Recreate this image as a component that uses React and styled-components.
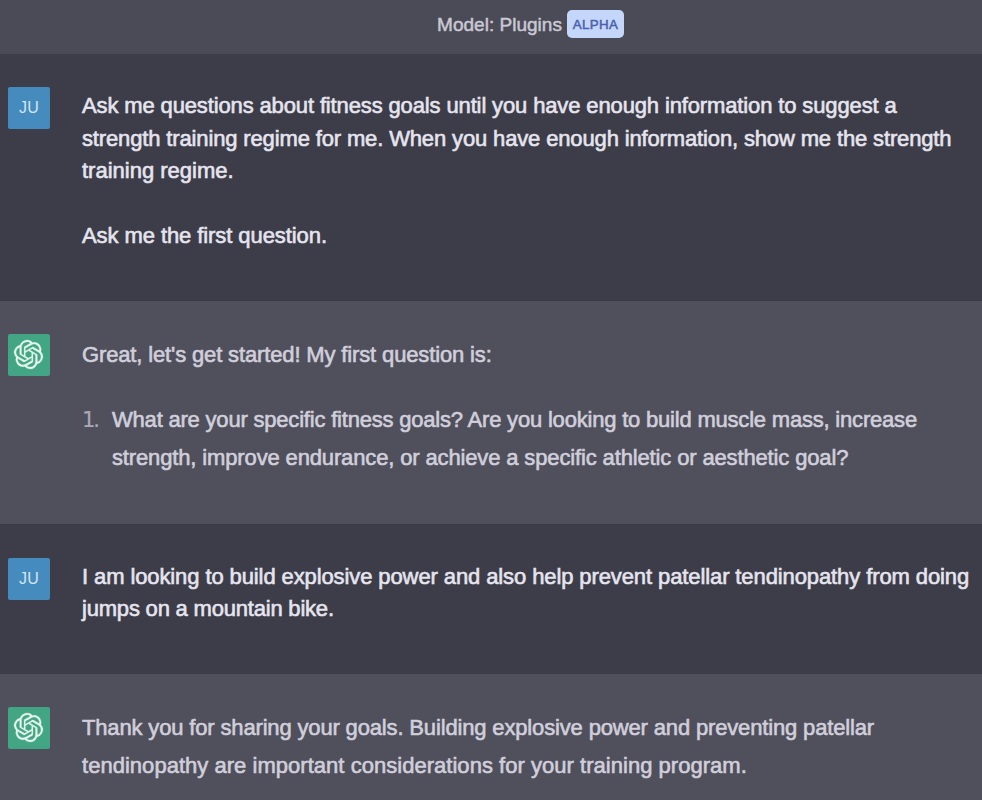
import React from 'react';
import styled, { createGlobalStyle } from 'styled-components';
import { SiOpenai } from 'react-icons/si';

const GlobalStyle = createGlobalStyle`
  *, *::before, *::after { box-sizing: border-box; }
  body {
    margin: 0;
    background: #50505d;
    font-family: "Liberation Sans", Arial, sans-serif;
    overflow: hidden;
  }
`;

const Page = styled.main`
  display: flex;
  flex-direction: column;
  width: 982px;
  height: 800px;
  overflow: hidden;
`;

const Header = styled.header`
  display: flex;
  align-items: center;
  justify-content: center;
  gap: 5px;
  flex: none;
  height: 54px;
  padding: 0 0 6px 79px;
  background: #4b4b57;
  color: #c9c8d4;
`;

const ModelName = styled.span`
  padding-top: 2px;
  font-size: 19px;
  letter-spacing: 0.02px;
  -webkit-text-stroke: 0.5px currentColor;
`;

const Badge = styled.span`
  display: flex;
  align-items: center;
  justify-content: center;
  width: 57px;
  height: 28px;
  padding-top: 1px;
  border-radius: 5px;
  background: #c4d7fb;
  color: #4a61ad;
  font-size: 13.3px;
  letter-spacing: 0.35px;
  -webkit-text-stroke: 0.5px currentColor;
`;

const Message = styled.section`
  display: flex;
  align-items: flex-start;
  gap: 32px;
  flex: none;
  height: ${(p) => p.$height}px;
  padding: 33px 0 0 8px;
  border-bottom: 1px solid #3a3b46;
  background: ${(p) => (p.$assistant ? '#50505d' : '#3d3d49')};
  color: ${(p) => (p.$assistant ? '#d0cfdb' : '#e6e5ef')};
`;

const Avatar = styled.div`
  display: flex;
  align-items: center;
  justify-content: center;
  flex: none;
  width: 42px;
  height: 42px;
  border-radius: 2px;
  background: ${(p) => (p.$assistant ? '#42a583' : '#468bbd')};
  color: ${(p) => (p.$assistant ? '#e4f6ee' : '#d0e6f6')};
  font-size: 16px;
  letter-spacing: 0.2px;
`;

const Logo = styled(SiOpenai)`
  width: 29px;
  height: 29px;
  margin: -1px 1px 0 0;
  stroke: currentColor;
  stroke-width: 0.2px;
  overflow: visible;
`;

const Body = styled.div`
  display: flex;
  flex-direction: column;
  gap: ${(p) => p.$gap || 0}px;
  padding-top: ${(p) => p.$top}px;
  font-size: 22px;
  line-height: ${(p) => p.$leading}px;
  -webkit-text-stroke: 0.6px currentColor;
`;

const Paragraph = styled.p`
  margin: 0;
`;

const Line = styled.span`
  display: block;
  white-space: nowrap;
  letter-spacing: ${(p) => p.$track || 0}px;
`;

const ListItem = styled.div`
  display: grid;
  grid-template-columns: 30px auto;
`;

const Marker = styled.span`
  color: #a9a9b7;
  font-family: "DejaVu Sans", sans-serif;
  font-size: 21px;
  letter-spacing: -2px;
  -webkit-text-stroke: 0.2px currentColor;
`;

export default function App() {
  return (
    <>
      <GlobalStyle />
      <Page>
        <Header>
          <ModelName>Model: Plugins</ModelName>
          <Badge>ALPHA</Badge>
        </Header>

        <Message $height={247}>
          <Avatar>JU</Avatar>
          <Body $top={3} $leading={32.6} $gap={32.6}>
            <Paragraph>
              <Line $track={-0.132}>Ask me questions about fitness goals until you have enough information to suggest a</Line>
              <Line $track={-0.141}>strength training regime for me. When you have enough information, show me the strength</Line>
              <Line>training regime.</Line>
            </Paragraph>
            <Paragraph>
              <Line $track={-0.08}>Ask me the first question.</Line>
            </Paragraph>
          </Body>
        </Message>

        <Message $assistant $height={224}>
          <Avatar $assistant><Logo /></Avatar>
          <Body $top={2} $leading={38} $gap={27}>
            <Paragraph>
              <Line $track={-0.14}>Great, let's get started! My first question is:</Line>
            </Paragraph>
            <ListItem>
              <Marker>1.</Marker>
              <Paragraph>
                <Line $track={-0.2}>What are your specific fitness goals? Are you looking to build muscle mass, increase</Line>
                <Line $track={-0.14}>strength, improve endurance, or achieve a specific athletic or aesthetic goal?</Line>
              </Paragraph>
            </ListItem>
          </Body>
        </Message>

        <Message $height={149}>
          <Avatar>JU</Avatar>
          <Body $top={3} $leading={32.4}>
            <Paragraph>
              <Line $track={-0.102}>I am looking to build explosive power and also help prevent patellar tendinopathy from doing</Line>
              <Line $track={-0.2}>jumps on a mountain bike.</Line>
            </Paragraph>
          </Body>
        </Message>

        <Message $assistant $height={160}>
          <Avatar $assistant><Logo /></Avatar>
          <Body $top={2} $leading={38}>
            <Paragraph>
              <Line $track={-0.155}>Thank you for sharing your goals. Building explosive power and preventing patellar</Line>
              <Line $track={0.03}>tendinopathy are important considerations for your training program.</Line>
            </Paragraph>
          </Body>
        </Message>
      </Page>
    </>
  );
}
